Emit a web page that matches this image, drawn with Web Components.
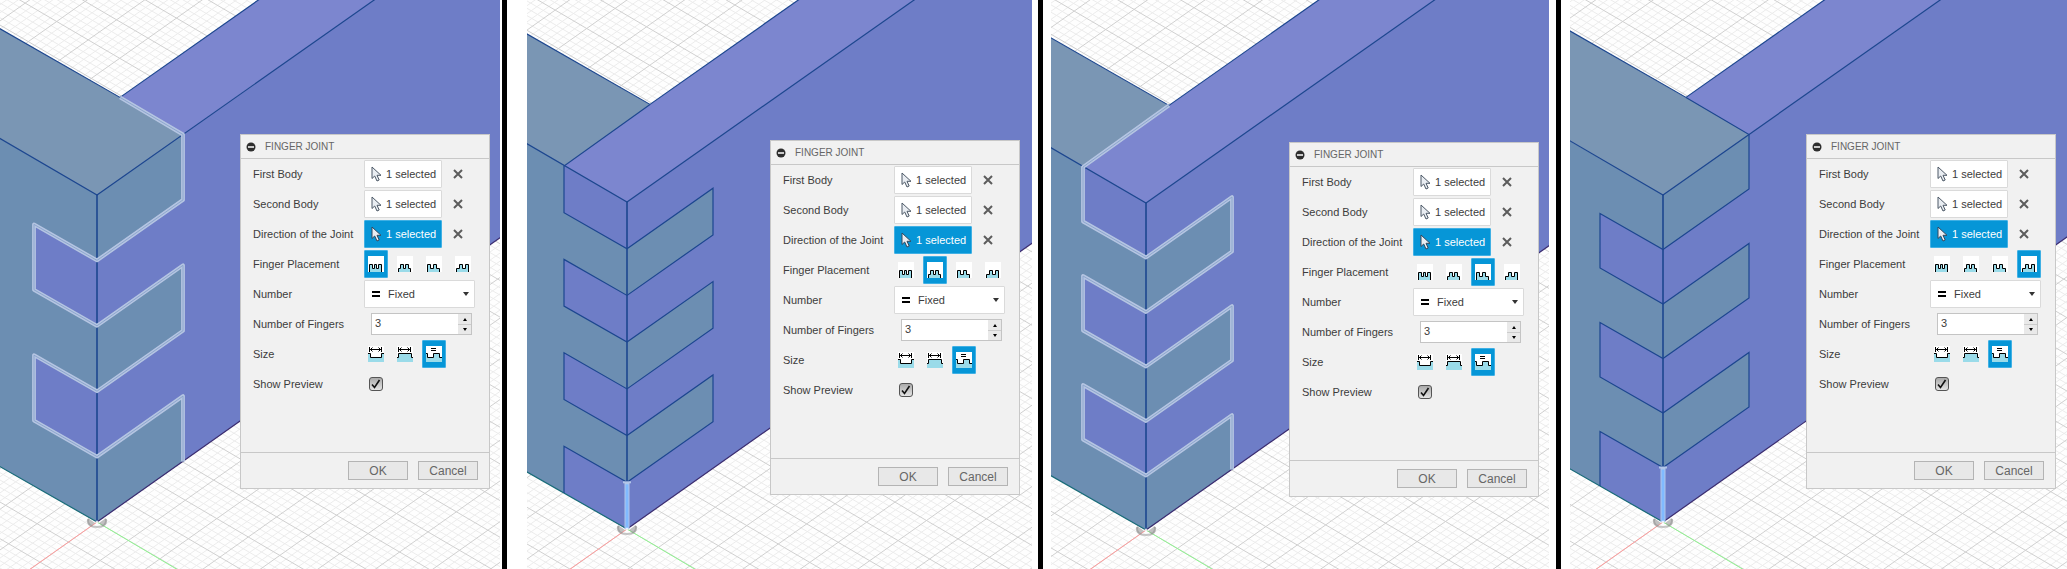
<!DOCTYPE html>
<html lang="en">
<head>
<meta charset="utf-8">
<title>Finger Joint placement options</title>
<style>
  body { margin: 0; background: #fff; font-family: "Liberation Sans", Arial, sans-serif; }
</style>
</head>
<body>
<joint-comparison>
  <joint-view style="--share:500;--left:240px;--top:134px" corner-x="97" corner-y="522" sections="5" top="steel" glow>
    <finger-joint-dialog placement="0"></finger-joint-dialog>
  </joint-view>
  <view-divider style="--before:2px;--after:20px"></view-divider>
  <joint-view style="--share:505;--left:243px;--top:140px" corner-x="100" corner-y="529" sections="7" top="blue">
    <finger-joint-dialog placement="1"></finger-joint-dialog>
  </joint-view>
  <view-divider style="--before:6px;--after:8px"></view-divider>
  <joint-view style="--share:498;--left:238px;--top:142px" corner-x="95" corner-y="530" sections="6" top="blue" glow>
    <finger-joint-dialog placement="2"></finger-joint-dialog>
  </joint-view>
  <view-divider style="--before:7px;--after:9px"></view-divider>
  <joint-view style="--share:497;--left:236px;--top:134px" corner-x="93" corner-y="522" sections="6" top="steel">
    <finger-joint-dialog placement="3"></finger-joint-dialog>
  </joint-view>
</joint-comparison>

<script>
class JointComparison extends HTMLElement {
  constructor() {
    super();
    this.attachShadow({ mode: 'open' }).innerHTML = `
      <style>:host { display: flex; min-height: 100vh; overflow: hidden; }</style><slot></slot>`;
  }
}

class ViewDivider extends HTMLElement {
  constructor() {
    super();
    this.attachShadow({ mode: 'open' }).innerHTML = `
      <style>:host { display: block; flex: none; width: 5px; background: #000;
        margin: 0 var(--after) 0 var(--before); }</style>`;
  }
}

/* Canvas with the two joined boards; the dialog is slotted over it. */
class JointView extends HTMLElement {
  constructor() { super(); this.attachShadow({ mode: 'open' }); }
  connectedCallback() {
    const cx = +this.getAttribute('corner-x'), cy = +this.getAttribute('corner-y');
    const n = +this.getAttribute('sections');
    const steelTop = this.getAttribute('top') === 'steel';
    const glow = this.hasAttribute('glow');
    const H = 327, R = 86, L = -63, RS = 0.704, LS = 0.572;
    const y = i => -H + H * i / n;
    const ry = i => y(i) - R * RS, ly = i => y(i) + L * LS;
    const p = v => v.toFixed(1);

    // floor grid: two families of parallel lines through the corner
    const a = [31.5, 18.4], b = [28.4, -20.1];
    let minor = '', major = '';
    for (let k = -160; k <= 160; k++) {
      const t = k / 5;
      const d = `M${p(t * a[0] - 40 * b[0])} ${p(t * a[1] - 40 * b[1])}L${p(t * a[0] + 40 * b[0])} ${p(t * a[1] + 40 * b[1])}` +
                `M${p(t * b[0] - 40 * a[0])} ${p(t * b[1] - 40 * a[1])}L${p(t * b[0] + 40 * a[0])} ${p(t * b[1] + 40 * a[1])}`;
      if (k % 5) minor += d; else major += d;
    }

    let right = '', left = '', joint = '';
    // one continuous outline so the corners of the highlight join cleanly
    let outline = 'M23 -424.6';
    for (let i = 0; i < n; i++) {
      const steel = (i % 2 === 0) === steelTop;
      const x = steel ? R : L, f = steel ? ry : ly;
      if (steel) right += `M0 ${p(y(i))}L${R} ${p(ry(i))}V${p(ry(i + 1))}L0 ${p(y(i + 1))}Z`;
      else left += `M0 ${p(y(i))}L${L} ${p(ly(i))}V${p(ly(i + 1))}L0 ${p(y(i + 1))}Z`;
      outline += `L${x} ${p(f(i))}V${p(f(i + 1))}`;
      if (i < n - 1) outline += `L0 ${p(y(i + 1))}`;
    }
    const steelTopFace = steelTop
      ? `0 -327 ${R} ${p(ry(0))} 23 -424.6 -177 -539 -177 -430`
      : `${L} ${p(ly(0))} 23 -424.6 -177 -539 -177 -430`;

    this.shadowRoot.innerHTML = `
      <style>
        :host { display: block; position: relative; flex: var(--share) 1 0; min-width: 0; overflow: hidden; background: #fefefe; }
        svg { position: absolute; inset: 0; width: 100%; height: 100%; }
        .overlay { position: relative; padding: var(--top) 0 0 var(--left); }
      </style>
      <svg aria-hidden="true"><g transform="translate(${cx} ${cy})" fill="none">
        <path d="${minor}" stroke="#ececec"/>
        <path d="${major}" stroke="#d0d0d0"/>
        <path d="M0 0L-120 84.5" stroke="#ff9c9c"/>
        <path d="M0 0L120 71" stroke="#90f590"/>
        <polygon fill="#7c86cf" points="${L} ${p(ly(0))} 23 -424.6 523 -776.6 523 -695 0 -327"/>
        <polygon fill="#7a96b4" points="${steelTopFace}"/>
        <polygon fill="#6e7dc7" points="0 0 0 -327 523 -695 523 -369"/>
        <polygon fill="#6c8eb2" points="0 0 0 -327 -177 -430 -177 -101"/>
        <path fill="#6c8eb2" d="${right}"/>
        <path fill="#6e7dc7" d="${left}"/>
        <g stroke="#1c468f" stroke-width="1.2">
          <path d="M-177 -430L0 -327L523 -695M-177 -539L23 -424.6L523 -776.6"/>
          <path d="M0 0V-327" stroke-width="1.6"/>
          <path d="M0 0L-177 -101" stroke="#186b78"/>
          <path d="M0 0L523 -369" stroke="#3b2c70"/>
        </g>
        ${glow
          ? `<g stroke-linejoin="round"><path d="${outline}" stroke="#b5c5e2" stroke-width="3.8"/>
             <path d="${outline}" stroke="#8da6cd" stroke-width="1"/></g>`
          : `<path d="${outline}" stroke="#1c468f" stroke-width="1.2"/>
             <path d="M0 ${p(y(n - 1))}V0" stroke="#b3c6e8" stroke-width="5"/>
             <path d="M-4 ${p(y(n - 1))}H4" stroke="#b3c6e8" stroke-width="2"/>
             <path d="M0 ${p(y(n - 1) + 2)}V0" stroke="#80baff" stroke-width="3"/>`}
        <path d="M-9 -3Q-10 5 0 5Q10 5 9 -3" stroke="#8c8c8c" stroke-opacity=".5" stroke-width="2"/>
        <path d="M-9 -4L-2 1L-6 4Q-11 2 -9 -4ZM9 -4L2 1L6 4Q11 2 9 -4Z" fill="#8c8c8c" fill-opacity=".55"/>
        <circle r="1.5" fill="#fff" fill-opacity=".8"/>
      </g></svg>
      <div class="overlay"><slot></slot></div>`;
  }
}

/* White/blue button which holds a body or edge selection, with its clear button. */
class SelectionField extends HTMLElement {
  connectedCallback() {
    const active = this.hasAttribute('active');
    this.attachShadow({ mode: 'open' }).innerHTML = `
      <style>
        :host { display: flex; align-items: center; gap: 11px; }
        button { font: inherit; color: inherit; padding: 0; margin: 0; }
        .pick { display: flex; align-items: center; gap: 4px; box-sizing: border-box; width: 78px; height: 28px;
          padding-left: 6px; border: 1px solid ${active ? '#40b0e4' : '#dadada'}; border-radius: 1px; white-space: nowrap;
          background: ${active ? '#0696d7' : '#fff'}; color: ${active ? '#fff' : '#3c3c3c'}; }
        .clear { display: flex; border: 0; background: none; }
      </style>
      <button class="pick" type="button">
        <svg width="11" height="16" viewBox="0 0 11 16" aria-hidden="true"><path d="M1 1V12.5L3.7 10L6 15L8.2 14L6 9.3H10Z"
          fill="#e9edf2" stroke="${active ? '#33475c' : '#4c5866'}"/></svg>
        1 selected</button>
      <button class="clear" type="button" aria-label="Clear selection">
        <svg width="10" height="10" viewBox="0 0 10 10" aria-hidden="true"><path d="M1 1L9 9M9 1L1 9" stroke="#5c5c5c" stroke-width="2"/></svg>
      </button>`;
  }
}

const DIMENSION = 'M1.5 1V6M13.5 1V6M2 3.5H13M4.5 1.5L2.5 3.5L4.5 5.5M10.5 1.5L12.5 3.5L10.5 5.5';
const ICONS = {
  placement: [
    ['Fingers outside', 'M1.5 17V8.5H4.5V12.5H6.5V8.5H8.5V12.5H10.5V8.5H13.5V17'],
    ['Fingers inside', 'M1.5 17V12.5H3.5V8.5H6.5V12.5H8.5V8.5H11.5V12.5H13.5V17'],
    ['Fingers at start', 'M1.5 17V8.5H4.5V12.5H7.5V8.5H10.5V12.5H13.5V17'],
    ['Fingers at end', 'M1.5 17V12.5H4.5V8.5H7.5V12.5H10.5V8.5H13.5V17']
  ].map(([name, d]) => [name, `<path d="${d}" fill="#9adbe9" stroke="#000"/>`]),
  size: [
    ['Fixed notch size', 'M-1 7.5H2.5V11.5H13.5V7.5H17V17H-1Z', DIMENSION],
    ['Fixed finger size', 'M-1 11.5H1.5V7.5H14.5V11.5H17V17H-1Z', DIMENSION],
    ['Equal sizes', 'M-1 7.5H1.5V11.5H7.5V7.5H13.5V11.5H17V17H-1Z', 'M5 2.5H10M5 4.5H10']
  ].map(([name, d, mark]) => [name, `<path d="${d}" fill="#9adbe9" stroke="#000"/><path d="${mark}" fill="none" stroke="#000"/>`])
};

class IconChoice extends HTMLElement {
  connectedCallback() {
    const kind = this.getAttribute('kind'), value = +this.getAttribute('value');
    this.attachShadow({ mode: 'open' }).innerHTML = `
      <style>
        :host { display: flex; gap: 5px; }
        label { position: relative; display: grid; place-items: center; box-sizing: border-box; width: 24px; height: 28px;
          border: 1px solid transparent; border-radius: 1px; }
        label:has(:checked) { background: #0696d7; border-color: #40b0e4; }
        input { position: absolute; inset: 0; margin: 0; width: 100%; height: 100%; opacity: 0; }
        svg { display: block; background: #fff; overflow: hidden; }
      </style>
      ${ICONS[kind].map(([name, art], i) => `<label title="${name}"><input type="radio" name="${kind}" aria-label="${name}" ${i === value ? 'checked' : ''}>
        <svg width="16" height="16" viewBox="0 0 16 16" aria-hidden="true">${art}</svg></label>`).join('')}`;
  }
}

class FingerJointDialog extends HTMLElement {
  connectedCallback() {
    this.attachShadow({ mode: 'open' }).innerHTML = `
      <style>
        :host { display: flex; flex-direction: column; box-sizing: border-box; width: 250px; min-height: 355px;
          background: #f1f1f1; border: 1px solid #c8c8c8; color: #3c3c3c; font-size: 11px; line-height: 14px; }
        header { display: flex; align-items: center; gap: 9px; height: 23px; padding-left: 5px; border-bottom: 1px solid #c8c8c8; }
        h2 { margin: 0; font-size: 10px; font-weight: 400; color: #666; }
        button, input, select { font: inherit; color: inherit; margin: 0; }
        .fold { display: flex; padding: 0; border: 0; background: none; }
        form { display: flex; flex-direction: column; flex: 1; margin: 0; }
        .row { display: grid; grid-template-columns: 111px 1fr; align-items: center; height: 30px; padding-left: 12px; white-space: nowrap; }
        .combo { position: relative; width: 111px; height: 28px; }
        .combo select { appearance: none; width: 100%; height: 100%; padding: 0 0 0 23px; background: #fff; border: 1px solid #dadada; border-radius: 1px; }
        .combo svg { position: absolute; inset: 0; pointer-events: none; }
        .spin { display: flex; box-sizing: border-box; width: 101px; height: 22px; margin-left: 7px; border: 1px solid #c4c4c4; background: #fff; }
        .spin input { appearance: textfield; flex: 1; min-width: 0; border: 0; padding: 0 0 2px 3px; background: none; }
        .spin input::-webkit-inner-spin-button { appearance: none; display: none; }
        .steps { display: grid; grid-template-rows: 1fr 1fr; width: 13px; background: #e9e9e9; }
        .steps button { display: grid; place-items: center; padding: 0; border: 0 solid #ccc; background: none; min-height: 0; }
        .steps button + button { border-top-width: 1px; }
        .tick { display: grid; width: 19px; align-items: center; }
        .tick > * { grid-area: 1 / 1; margin-left: 5px; }
        .check { appearance: none; width: 14px; height: 14px; border: 1px solid #555; border-radius: 3px;
          background: linear-gradient(#aaa, #e4e4e4); box-sizing: border-box; }
        .tick svg { pointer-events: none; }
        footer { display: flex; justify-content: flex-end; gap: 10px; margin-top: auto; padding: 8px 11px; border-top: 1px solid #c8c8c8; }
        footer button { box-sizing: border-box; width: 60px; height: 19px; padding: 0; border: 1px solid #b4b4b4; background: #e8e8e8;
          color: #666; font-size: 12px; line-height: 14px; }
      </style>
      <header>
        <button class="fold" type="button" aria-label="Collapse">
          <svg width="10" height="10" viewBox="0 0 10 10" aria-hidden="true"><circle cx="5" cy="5" r="4.5" fill="#2e2e2e"/><path d="M2 5H8" stroke="#fff" stroke-width="1.5"/></svg>
        </button>
        <h2>FINGER JOINT</h2>
      </header>
      <form>
        <div class="row"><span>First Body</span><selection-field></selection-field></div>
        <div class="row"><span>Second Body</span><selection-field></selection-field></div>
        <div class="row"><span>Direction of the Joint</span><selection-field active></selection-field></div>
        <div class="row"><span>Finger Placement</span><icon-choice kind="placement" value="${this.getAttribute('placement')}"></icon-choice></div>
        <div class="row"><label for="number">Number</label>
          <div class="combo"><select id="number"><option>Fixed</option></select>
            <svg width="111" height="28" aria-hidden="true"><path d="M8 12H16M8 16H16" stroke="#000" stroke-width="2"/><path d="M99 12H105L102 16Z" fill="#333"/></svg></div></div>
        <div class="row"><label for="fingers">Number of Fingers</label>
          <div class="spin"><input id="fingers" type="number" value="3">
            <div class="steps">
              <button type="button" aria-label="More"><svg width="4" height="3" aria-hidden="true"><path d="M0 3L2 0L4 3Z"/></svg></button>
              <button type="button" aria-label="Fewer"><svg width="4" height="3" aria-hidden="true"><path d="M0 0L2 3L4 0Z"/></svg></button>
            </div></div></div>
        <div class="row"><span>Size</span><icon-choice kind="size" value="2"></icon-choice></div>
        <div class="row"><label for="preview">Show Preview</label>
          <div class="tick"><input class="check" id="preview" type="checkbox" checked>
            <svg width="14" height="14" viewBox="0 0 14 14" aria-hidden="true"><path d="M3 7.5L5.5 10.5L10.5 3" fill="none" stroke="#111" stroke-width="1.6"/></svg></div></div>
        <footer><button type="button">OK</button><button type="button">Cancel</button></footer>
      </form>`;
  }
}

customElements.define('selection-field', SelectionField);
customElements.define('icon-choice', IconChoice);
customElements.define('finger-joint-dialog', FingerJointDialog);
customElements.define('joint-view', JointView);
customElements.define('view-divider', ViewDivider);
customElements.define('joint-comparison', JointComparison);
</script>
</body>
</html>
